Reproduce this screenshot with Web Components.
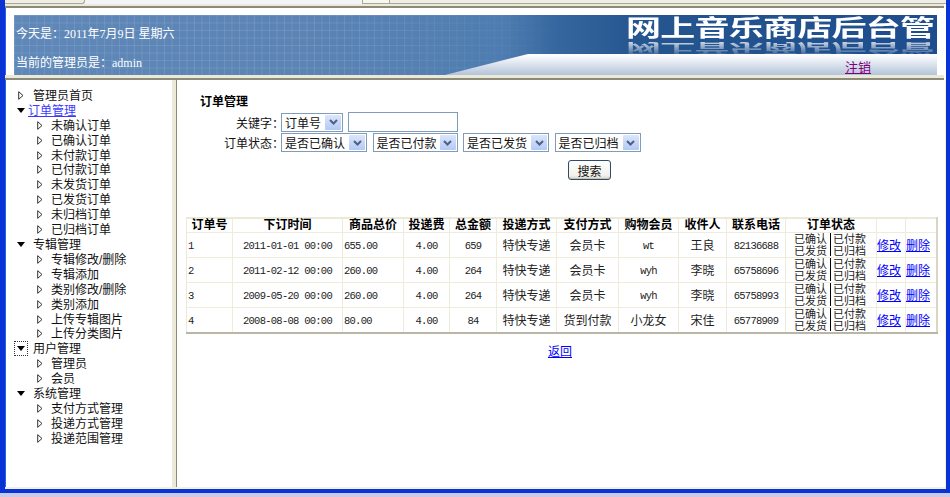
<!DOCTYPE html>
<html lang="zh">
<head>
<meta charset="utf-8">
<title>网上音乐商店后台管理</title>
<style>
html, body { margin: 0; height: 100%; overflow: hidden; background: #fff; }
body { font: 12px "Liberation Serif", "Noto Sans CJK SC", serif; }
</style>
</head>
<body>
<admin-window>
	<admin-banner slot="banner" today="今天是：2011年7月9日 星期六" admin="当前的管理员是：admin"></admin-banner>
	<nav-tree slot="side"></nav-tree>
	<order-page slot="main"></order-page>
</admin-window>

<script>
var cjk = '"Noto Sans CJK SC", sans-serif'
var tight = '"Liberation Sans", "Noto Sans CJK SC", sans-serif'

class AdminWindow extends HTMLElement {
	constructor() {
		super()
		this.attachShadow({mode: 'open'}).innerHTML = `<style>
:host { display: flex; flex-direction: column; width: 950px; height: 497px; box-sizing: border-box; background: #c9c9ea; }
#frame { flex: none; height: 493px; box-sizing: border-box; display: flex; flex-direction: column; background: #fff;
	border: solid #0a33d6; border-width: 0 4px 4px 5px; box-shadow: inset 1px 0 #2a62f0; }
#tabs { flex: none; height: 4px; background: #f2f4fa; display: flex; }
#tabs i { display: block; box-sizing: border-box; height: 4px; border: solid #a9a899; border-width: 0 1px 1px 0; background: #efeee6; }
#tabs i:first-child { width: 80px; border-radius: 0 0 3px 0; }
#tabs i:nth-child(2) { width: 277px; background: none; border: 0; }
#tabs i:nth-child(3) { width: 28px; background: #f7f7f2; border-left: 1px solid #a9a899; }
#tabs i:nth-child(4) { flex: 1; border-width: 0 0 1px 0; }
#rule { flex: none; height: 4px; box-sizing: border-box; background: #ece9d8; border-bottom: 2px solid #8c8a78; margin-right: 2px; }
#head { flex: none; padding: 7px 9px 0 9px; height: 67px; box-sizing: border-box; }
#split { flex: none; height: 5px; box-sizing: border-box; background: #ece9d8; border-bottom: 2px solid #8c8a78; margin-right: 2px; }
#body { flex: 1; min-height: 0; display: flex; border-right: 1px solid #f6efdc; }
#side { flex: none; width: 167px; box-sizing: border-box; }
#bar { flex: none; width: 5px; background: #ece9d8; border-right: 1px solid #8c8a78; box-sizing: border-box; }
#main { flex: 1; min-width: 0; }
#foot { flex: none; height: 2px; background: #f6efdc; }
</style>
<div id="frame">
	<div id="tabs"><i></i><i></i><i></i><i></i></div>
	<div id="rule"></div>
	<div id="head"><slot name="banner"></slot></div>
	<div id="split"></div>
	<div id="body">
		<div id="side"><slot name="side"></slot></div>
		<div id="bar"></div>
		<div id="main"><slot name="main"></slot></div>
	</div>
	<div id="foot"></div>
</div>`
	}
}
customElements.define('admin-window', AdminWindow)

class AdminBanner extends HTMLElement {
	connectedCallback() {
		var title = '网上音乐商店后台管'
		var shadow = this.attachShadow({mode: 'open'})
		shadow.innerHTML = `<style>
:host { display: block; height: 60px; position: relative; overflow: hidden;
	background: linear-gradient(90deg, #5f88b8 0, #5b84b4 300px, #4e7cb0 490px, #36689f 540px, #26568f 620px, #1d4d8d 100%); color: #fff; }
#grid { position: absolute; left: 0; top: 0; bottom: 0; width: 560px;
	background-image: linear-gradient(rgba(190,210,235,.17) 1px, transparent 1px), linear-gradient(90deg, rgba(190,210,235,.17) 1px, transparent 1px);
	background-size: 15px 7.5px, 7.5px 15px;
	-webkit-mask-image: linear-gradient(90deg, #000 60%, transparent); mask-image: linear-gradient(90deg, #000 60%, transparent); }
#info { position: relative; height: 100%; box-sizing: border-box; padding: 12px 0 0 2px; display: flex; flex-direction: column; gap: 15px; font: 12px/14px "Liberation Serif", "Noto Sans CJK SC", serif; }
#strip { position: absolute; left: 0; right: 0; top: 39px; bottom: 0;
	background: linear-gradient(#fff, #f4f6fa 18%, #b4c4d9);
	clip-path: polygon(431px 100%, 514px 0, 100% 0, 100% 100%); }
#logout { position: absolute; left: 831px; top: 44px; font: 13px/16px ${cjk}; color: #800080; }
.title { position: absolute; left: 612px; white-space: nowrap; font: 700 35px/36px "Liberation Sans", "Noto Sans CJK SC", sans-serif; letter-spacing: -.75px; transform-origin: 0 0; }
#t1 { transform: scale(1, .64); top: 2px; }
#t2 { transform: scale(1, -.38); top: 40px; opacity: .8;
	-webkit-mask-image: linear-gradient(rgba(0,0,0,.25) 15%, #000 100%); mask-image: linear-gradient(rgba(0,0,0,.25) 15%, #000 100%); }
</style>
<div id="grid"></div>
<div id="info"><span>${this.getAttribute('today')}</span><span>${this.getAttribute('admin')}</span></div>
<div class="title" id="t1">${title}</div>
<div class="title" id="t2">${title}</div>
<div id="strip"></div>
<a id="logout" href="#">注销</a>`
	}
}
customElements.define('admin-banner', AdminBanner)

var navData = [
	['管理员首页', 1, 'leaf'],
	['订单管理', 1, 'open', 'link'],
	['未确认订单', 2], ['已确认订单', 2], ['未付款订单', 2], ['已付款订单', 2],
	['未发货订单', 2], ['已发货订单', 2], ['未归档订单', 2], ['已归档订单', 2],
	['专辑管理', 1, 'open'],
	['专辑修改/删除', 2], ['专辑添加', 2], ['类别修改/删除', 2], ['类别添加', 2], ['上传专辑图片', 2], ['上传分类图片', 2],
	['用户管理', 1, 'open', 'focus'],
	['管理员', 2], ['会员', 2],
	['系统管理', 1, 'open'],
	['支付方式管理', 2], ['投递方式管理', 2], ['投递范围管理', 2]
]

class NavItem extends HTMLElement {
	connectedCallback() {
		var level = this.getAttribute('level')
		var open = this.hasAttribute('open')
		var link = this.hasAttribute('link')
		var arrow = open
			? '<svg width="8" height="5" viewBox="0 0 8 5"><path d="M0 0H8L4 5Z" fill="#000"/></svg>'
			: '<svg width="6" height="9" viewBox="0 0 6 9"><path d="M.7.7L5 4.5.7 8.3Z" fill="#fff" stroke="#333" stroke-width="1"/></svg>'
		var left = level == 2 ? 32 : (open ? 11 : 13)
		var gap = level == 2 ? 8 : (link ? 2 : (open ? 7 : 9))
		this.attachShadow({mode: 'open'}).innerHTML = `<style>
:host { display: flex; align-items: center; height: 14.91px; font: 12px/15px ${tight}; color: #111; white-space: nowrap; }
#ico { flex: none; display: flex; align-items: center; justify-content: center; margin-left: ${left}px; margin-right: ${gap}px; width: ${open ? 10 : 6}px; height: 14px; box-sizing: border-box; position: relative; top: -1px; }
:host([focus]) #ico { outline: 1px dotted #333; outline-offset: 1px; height: 11px; }
:host([link]) { color: #3a3aff; text-decoration: underline; }
</style><span id="ico">${arrow}</span><slot></slot>`
	}
}
customElements.define('nav-item', NavItem)

class NavTree extends HTMLElement {
	connectedCallback() {
		var shadow = this.attachShadow({mode: 'open'})
		shadow.innerHTML = `<style>:host { display: block; padding-top: 9px; }</style>`
		navData.forEach(d => {
			var it = document.createElement('nav-item')
			it.setAttribute('level', d[1])
			if(d[2] == 'open') it.setAttribute('open', '')
			if(d[3]) it.setAttribute(d[3], '')
			it.textContent = d[0]
			shadow.appendChild(it)
		})
	}
}
customElements.define('nav-tree', NavTree)

class XpSelect extends HTMLElement {
	constructor() {
		super()
		this.attachShadow({mode: 'open'}).innerHTML = `<style>
:host { display: inline-flex; align-items: center; justify-content: space-between; box-sizing: border-box; height: 19px; padding: 1px; border: 1px solid #7f9db9; background: #fff; font: 12px/15px ${cjk}; color: #111; white-space: nowrap; }
#txt { padding-left: 2px; }
#btn { flex: none; width: 16px; height: 15px; border-radius: 1px; background: linear-gradient(#dbe6fb, #b3c9f5); display: flex; align-items: center; justify-content: center; }
</style><span id="txt"><slot></slot></span><span id="btn"><svg width="9" height="6" viewBox="0 0 9 6"><path d="M1 1L4.500 4.500 8 1" fill="none" stroke="#4d6185" stroke-width="2"/></svg></span>`
	}
}
customElements.define('xp-select', XpSelect)

class XpButton extends HTMLElement {
	constructor() {
		super()
		this.attachShadow({mode: 'open'}).innerHTML = `<style>
:host { display: inline-flex; align-items: center; justify-content: center; box-sizing: border-box; width: 43px; height: 20px; border: 1px solid #2f4a6e; border-radius: 3px; background: linear-gradient(#fff, #f3f2ea 80%, #d8d5c6); box-shadow: inset 0 -1px #c9c5b2; font: 12px/15px ${cjk}; color: #111; }
</style><slot></slot>`
	}
}
customElements.define('xp-button', XpButton)

var orders = [
	['1', '2011-01-01 00:00', '655.00', '4.00', '659', '特快专递', '会员卡', 'wt', '王良', '82136688'],
	['2', '2011-02-12 00:00', '260.00', '4.00', '264', '特快专递', '会员卡', 'wyh', '李晓', '65758696'],
	['3', '2009-05-20 00:00', '260.00', '4.00', '264', '特快专递', '会员卡', 'wyh', '李晓', '65758993'],
	['4', '2008-08-08 00:00', '80.00', '4.00', '84', '特快专递', '货到付款', '小龙女', '宋佳', '65778909']
]
var colw = [46, 110, 61, 46, 47, 60, 62, 60, 48, 59, 91, 29, 31]
var heads = ['订单号', '下订时间', '商品总价', '投递费', '总金额', '投递方式', '支付方式', '购物会员', '收件人', '联系电话', '订单状态', '', '']

class OrderTable extends HTMLElement {
	connectedCallback() {
		var mono = v => /^[\x00-\x7f]+$/.test(v) ? `<span class="m">${v}</span>` : v
		var rows = orders.map(o => `<tr>
			${o.map((v, i) => `<td class="${i == 0 || i == 2 ? 'l' : ''}">${mono(v)}</td>`).join('')}
			<td class="s"><div class="st"><span>已确认</span><i></i><span>已付款</span><span>已发货</span><span>已归档</span></div></td>
			<td class="a"><a href="#">修改</a></td><td class="a"><a href="#">删除</a></td>
		</tr>`).join('')
		this.attachShadow({mode: 'open'}).innerHTML = `<style>
:host { display: block; width: 750px; }
table { table-layout: fixed; width: 750px; border-collapse: collapse; font: 12px/12px ${tight}; color: #222; }
th { height: 12px; padding: 0 0 1px; font-weight: 700; color: #000; background: #fff; border: 1px solid #f0ecdc; border-top: 2px solid #ece9d8; }
td { height: 25px; padding: 1px 0 0; text-align: center; box-sizing: border-box; border: 1px solid #f0ecdc; white-space: nowrap; }
td.s { padding: 0; }
th:first-child, td:first-child { border-left: 1px solid #ece9d8; }
th:last-child, td:last-child { border-right: 2px solid #d9d6c6; }
tr:last-child td { border-bottom: 2px solid #b9b6a6; }
td.l { text-align: left; padding-left: 1px; }
td.a { text-align: left; }
.m { font: 10.500px/12px "Liberation Mono", monospace; letter-spacing: -.74px; }
a { color: #0000ff; }
.st { display: grid; grid-template-columns: 36px 1px 38px; margin-left: 8px; font-size: 11px; line-height: 12px; text-align: left; }
.st i { display: block; width: 1px; height: 23px; grid-column: 2; grid-row: 1 / 3; background: #000; }
.st span:nth-of-type(even) { padding-left: 2px; }
</style><table>
<colgroup>${colw.map(w => `<col style="width:${w}px">`).join('')}</colgroup>
<tr>${heads.map(h => `<th>${h}</th>`).join('')}</tr>
${rows}
</table>`
	}
}
customElements.define('order-table', OrderTable)

class OrderPage extends HTMLElement {
	constructor() {
		super()
		this.attachShadow({mode: 'open'}).innerHTML = `<style>
:host { display: block; font: 12px/15px ${cjk}; color: #111; }
h1 { margin: 0; padding: 13px 0 0 23px; font: 700 12px/15px ${cjk}; color: #000; }
form { display: grid; grid-template-columns: 104px auto; row-gap: 1px; margin-top: 4px; }
label { display: flex; align-items: center; justify-content: flex-end; margin-right: -3px; }
.row { display: flex; gap: 5.500px; align-items: center; }
.row.first { gap: 5px; }
input { box-sizing: border-box; width: 110px; height: 20px; margin: 0; border: 1px solid #7f9db9; background: #fff; padding: 0; }
#search { display: flex; justify-content: center; padding-left: 57px; margin-top: 8px; }
#tbl { margin: 37px 0 0 9px; }
#back { text-align: center; margin-top: 9px; padding-right: 2px; }
a { color: #0000ff; }
</style>
<h1>订单管理</h1>
<form onsubmit="return false">
	<label>关键字：</label>
	<div class="row first"><xp-select style="width:62px">订单号</xp-select><input type="text"></div>
	<label>订单状态：</label>
	<div class="row">
		<xp-select style="width:86px">是否已确认</xp-select>
		<xp-select style="width:85px">是否已付款</xp-select>
		<xp-select style="width:86px">是否已发货</xp-select>
		<xp-select style="width:86px">是否已归档</xp-select>
	</div>
</form>
<div id="search"><xp-button>搜索</xp-button></div>
<div id="tbl"><order-table></order-table></div>
<div id="back"><a href="#">返回</a></div>`
	}
}
customElements.define('order-page', OrderPage)
</script>
</body>
</html>
